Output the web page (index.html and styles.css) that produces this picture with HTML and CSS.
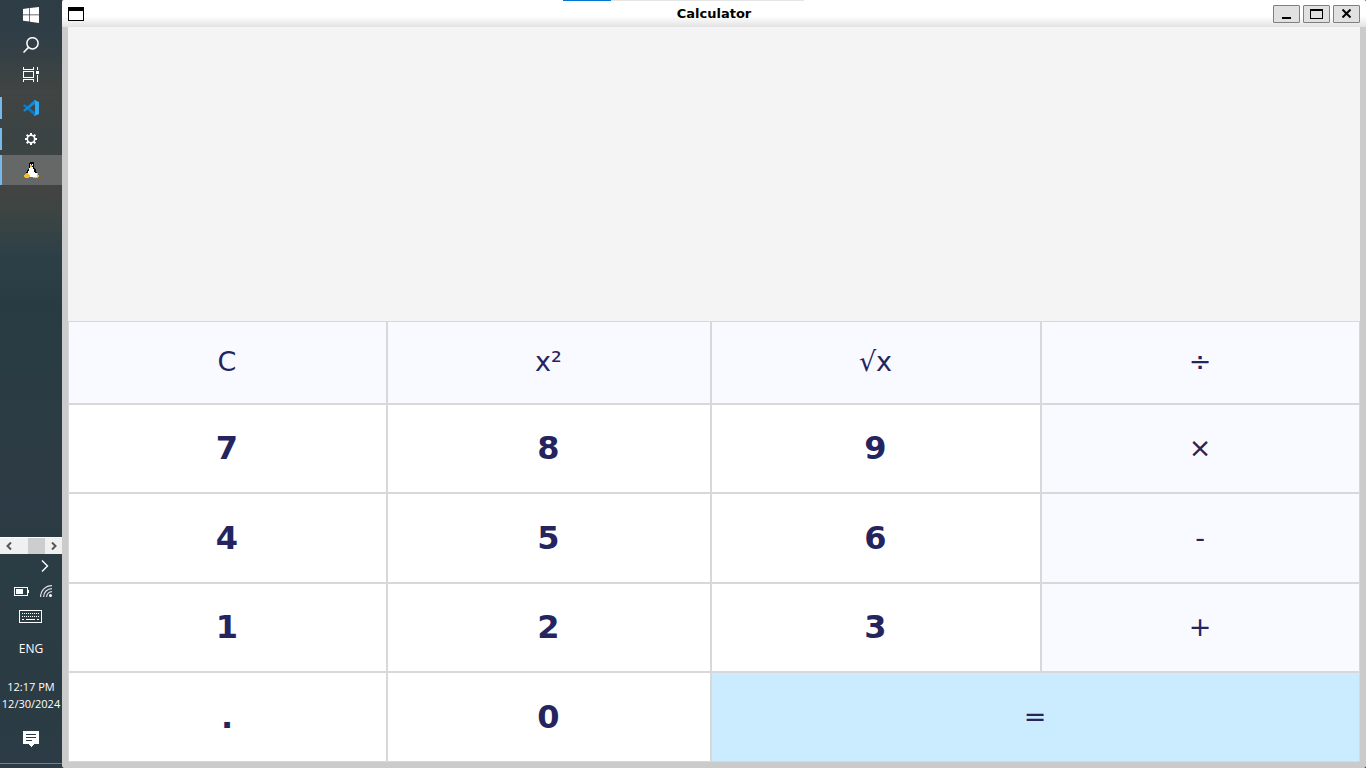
FILE: index.html
```html
<!DOCTYPE html>
<html lang="en">
<head>
<meta charset="utf-8">
<title>Calculator</title>
<link rel="stylesheet" href="styles.css">
</head>
<body>
<div class="desktop">
  <nav class="taskbar" aria-label="Taskbar">
    <div class="system-buttons">
      <button class="task" type="button" aria-label="Start"><svg width="16" height="16" viewBox="0 0 16 16" fill="#fff"><path d="M0 2l6.3-.9v6.4H0zM7 1l9-1v7.5H7zM0 8.2h6.3v6.4L0 13.8zM7 8.2h9V16l-9-1.2z"/></svg></button>
      <button class="task" type="button" aria-label="Search"><svg width="16" height="16" viewBox="0 0 16 16" fill="none" stroke="#fff" stroke-width="1.5"><circle cx="9.5" cy="6.3" r="5.6"/><path d="M5.5 10.4L.5 15.5"/></svg></button>
      <button class="task" type="button" aria-label="Task view"><svg width="16" height="16" viewBox="0 0 16 16" fill="none" stroke="#fff" shape-rendering="crispEdges"><path d="M.5 0v2.500h10V0M.5 15v-2.500h10V15M.5 4.500h10v6H.5zM14.500 0v3M14.500 8v7"/><path d="M13 4h3v3h-3z" fill="#fff" stroke="none"/></svg></button>
    </div>
    <div class="running-apps">
      <button class="task running" type="button" aria-label="Code editor"><svg width="16" height="16" viewBox="0 0 16 16"><path d="M0 5.600L1.600 4.200 12 12v4h-.4z" fill="#0879c9"/><path d="M0 10.400L11.600 0H12v4L1.600 11.800z" fill="#0c8bdc"/><path d="M11.600 0L16 2v12l-4.400 2-.8-.5L12 15V1l-1.200-.5z" fill="#2fa8f2"/><path d="M12 1h1v14h-1z" fill="#2fa8f2"/></svg></button>
      <button class="task running" type="button" aria-label="Settings"><svg width="12" height="12" viewBox="0 0 12 12" fill="none" stroke="#fff"><circle cx="6" cy="6" r="3.700" stroke-width="1.600"/><path d="M10 6h2M0 6h2M6 0v2M6 10v2M8.800 8.800l1.500 1.500M1.700 1.700l1.500 1.500M8.800 3.200l1.500-1.500M1.700 10.300l1.500-1.500" stroke-width="2"/></svg></button>
      <button class="task running active" type="button" aria-label="Linux app"><svg width="18" height="16" viewBox="0 0 18 16" shape-rendering="crispEdges"><path d="M8 0h3l1 1v4l2 3 1 3v4H4v-4l3-5V1z" fill="#080808"/><path d="M8 5h3l1 3 1 3v3l-2 1H6v-4z" fill="#fff"/><path d="M12 11h3l1 3-1 1h-4z" fill="#fff"/><path d="M8 2h1v1H8zM10 2h1v1h-1z" fill="#fff"/><path d="M8 3h3v1h-1v1H8zM4 11h2l2 3-1 2H4l-2-1v-2zM15 11h1l1 3v1l-2 1h-4v-1h4z" fill="#f4bd24"/></svg></button>
    </div>
    <div class="tray">
      <div class="scroller">
        <button class="scroll-arrow" type="button" aria-label="Scroll left"><svg width="6" height="8" viewBox="0 0 6 8" fill="none" stroke="#555" stroke-width="2"><path d="M5 .5L1.500 4 5 7.500"/></svg></button>
        <span class="scroll-track"><span class="scroll-thumb"></span></span>
        <button class="scroll-arrow" type="button" aria-label="Scroll right"><svg width="6" height="8" viewBox="0 0 6 8" fill="none" stroke="#555" stroke-width="2"><path d="M1 .5L4.500 4 1 7.500"/></svg></button>
      </div>
      <button class="tray-more" type="button" aria-label="Show hidden icons"><svg width="8" height="12" viewBox="0 0 8 12" fill="none" stroke="#fff" stroke-width="1.400"><path d="M1 .5L6.500 6 1 11.500"/></svg></button>
      <div class="tray-status">
        <svg width="15" height="9" viewBox="0 0 15 9" role="img" aria-label="Battery" shape-rendering="crispEdges"><path d="M.5.5h13v8H.5z" fill="none" stroke="#fff"/><path d="M2 2h7v5H2zM14 3h1v3h-1z" fill="#fff"/></svg>
        <svg width="12" height="12" viewBox="0 0 12 12" role="img" aria-label="Wi-Fi" fill="none" stroke="#fff" stroke-width="1.200"><path d="M.6 12C.6 5.500 5.500.6 12 .6M3.600 12c0-4.800 3.600-8.400 8.400-8.400M6.600 12c0-3 2.400-5.400 5.400-5.400" stroke-opacity=".85"/><circle cx="10.500" cy="10.500" r="1.500" fill="#fff" stroke="none"/></svg>
      </div>
      <button class="tray-row" type="button" aria-label="Touch keyboard"><svg width="23" height="13" viewBox="0 0 23 13" fill="none" stroke="#fff" shape-rendering="crispEdges"><path d="M.5.5h22v12H.5z"/><path d="M3 3.500h17M3 6.500h17" stroke-dasharray="1 1"/><path d="M3 9.500h2M7 9.500h9M18 9.500h2"/></svg></button>
      <button class="language" type="button">ENG</button>
      <button class="clock" type="button"><span>12:17 PM</span><span>12/30/2024</span></button>
      <button class="notifications" type="button" aria-label="Notifications"><svg width="16" height="16" viewBox="0 0 16 16" shape-rendering="crispEdges"><path d="M0 0h16v13h-5l-3 3-3-3H0z" fill="#fff"/><path d="M3 3.500h10M3 6.500h10M3 9.500h6" stroke="#2c3b45"/></svg></button>
      <div class="show-desktop"></div>
    </div>
  </nav>
  <main class="window">
    <header class="titlebar">
      <svg class="window-icon" width="16" height="14" viewBox="0 0 16 14" shape-rendering="crispEdges"><path d="M0 0h16v14H0z"/><path d="M1 4h14v9H1z" fill="#fff"/></svg>
      <h1 class="title">Calculator</h1>
      <div class="window-controls">
        <button class="control" type="button" aria-label="Minimize"><svg width="13" height="10" viewBox="0 0 13 10"><path d="M2 8h9v2H2z"/></svg></button>
        <button class="control" type="button" aria-label="Maximize"><svg width="13" height="10" viewBox="0 0 13 10" shape-rendering="crispEdges"><path d="M0 0h13v10H0z"/><path d="M1 2h11v7H1z" fill="#e1e1e1"/></svg></button>
        <button class="control" type="button" aria-label="Close"><svg width="9" height="9" viewBox="0 0 9 9" fill="none" stroke="#000" stroke-width="2"><path d="M.5.5l8 8M8.500.5l-8 8"/></svg></button>
      </div>
    </header>
    <section class="calculator" aria-label="Calculator">
      <output class="display" aria-label="Result"></output>
      <button class="key operator" type="button">C</button>
      <button class="key operator" type="button">x²</button>
      <button class="key operator" type="button">√x</button>
      <button class="key operator" type="button">÷</button>
      <button class="key" type="button">7</button>
      <button class="key" type="button">8</button>
      <button class="key" type="button">9</button>
      <button class="key operator" type="button">×</button>
      <button class="key" type="button">4</button>
      <button class="key" type="button">5</button>
      <button class="key" type="button">6</button>
      <button class="key operator" type="button">-</button>
      <button class="key" type="button">1</button>
      <button class="key" type="button">2</button>
      <button class="key" type="button">3</button>
      <button class="key operator" type="button">+</button>
      <button class="key" type="button">.</button>
      <button class="key" type="button">0</button>
      <button class="key operator equals" type="button">=</button>
    </section>
  </main>
  <div class="loading-strip"></div>
</div>
</body>
</html>
```
FILE: styles.css
```css
* {
  box-sizing: border-box;
}

body {
  margin: 0;
  background: #000;
  font-family: "DejaVu Sans", sans-serif;
}

button {
  margin: 0;
  padding: 0;
  border: 0;
  background: none;
  color: inherit;
  font: inherit;
}

svg {
  display: block;
  flex: none;
}

.desktop {
  display: flex;
  height: 100vh;
}

/* Taskbar */
.taskbar {
  display: flex;
  flex-direction: column;
  flex: none;
  width: 62px;
  background: linear-gradient(#2e3c46 0%, #303e46 5%, #414543 12%, #3b4344 18%, #424442 25%, #3c4443 28%, #2e4047 33%, #283b43 40%, #2b3c43 54%, #2d3b45 64%, #2a3c44 75%, #2c3b45 100%);
  color: #fff;
  font-family: "Open Sans", "Noto Sans", sans-serif;
  font-size: 11px;
}

.system-buttons {
  display: flex;
  flex-direction: column;
}

.task {
  display: grid;
  place-items: center;
  height: 30px;
}

.running-apps {
  display: flex;
  flex-direction: column;
  gap: 1px;
  margin-top: 3px;
}

.running {
  background: linear-gradient(#76b9ed, #76b9ed) left center / 2px 22px no-repeat;
}

.running.active {
  background: linear-gradient(#76b9ed, #76b9ed) left center / 2px 100% no-repeat, #656866;
}

.tray {
  display: flex;
  flex-direction: column;
  margin-top: auto;
}

.scroller {
  display: flex;
  height: 17px;
  border-top: 1px solid #fff;
  background: #f0f0f0;
}

.scroll-arrow {
  display: grid;
  place-items: center;
  width: 17px;
}

.scroll-track {
  display: flex;
  flex: 1;
  justify-content: flex-end;
}

.scroll-thumb {
  width: 17px;
  background: #cdcdcd;
}

.tray-more {
  display: flex;
  align-items: center;
  justify-content: flex-end;
  height: 24px;
  padding-right: 13px;
}

.tray-status {
  display: flex;
  align-items: center;
  justify-content: flex-end;
  gap: 11px;
  height: 26px;
  padding-right: 10px;
}

.tray-row {
  display: grid;
  place-items: center;
  height: 26px;
  padding: 0 2px 2px 0;
}

.language {
  height: 38px;
  padding-bottom: 2px;
  font-size: 12px;
}

.clock {
  display: flex;
  flex-direction: column;
  align-items: center;
  margin-top: 10px;
  line-height: 17px;
}

.notifications {
  display: grid;
  place-items: center;
  height: 30px;
  margin-top: 12px;
}

.show-desktop {
  height: 5px;
  margin-top: 9px;
  border-top: 1px solid #72808a;
}

/* Application window */
.window {
  display: flex;
  flex: 1;
  flex-direction: column;
  min-width: 0;
  padding-bottom: 6px;
  border-radius: 2px;
  background: #cbcbcb;
}

.titlebar {
  display: grid;
  grid-template-columns: 1fr auto 1fr;
  align-items: center;
  flex: none;
  height: 27px;
  padding: 0 6px;
  border-radius: 2px 2px 0 0;
  background: linear-gradient(#fff 60%, #e2e2e2);
}

.title {
  margin: 0;
  font-size: 13px;
  line-height: 27px;
}

.window-controls {
  display: flex;
  justify-content: flex-end;
  gap: 3px;
}

.control {
  display: grid;
  place-items: center;
  width: 27px;
  height: 18px;
  border: 1px solid #7f7f7f;
  border-radius: 1px;
  background: #e1e1e1;
}

.loading-strip {
  position: absolute;
  top: 0;
  left: 50%;
  width: 241px;
  height: 1px;
  margin-left: -120px;
  background: linear-gradient(90deg, #0078d7 48px, #e5e5e5 48px);
}

/* Keypad */
.calculator {
  display: grid;
  flex: 1;
  grid-template-columns: 319fr 324fr 330fr 319fr;
  grid-template-rows: 294fr 83fr 89fr 90fr 89fr 90fr;
  margin: 0 6px;
}

.display {
  grid-column: 1 / -1;
  background: #f4f4f4;
}

.key {
  padding: 0 1px 1px 0;
  border: 1px solid #d8d8da;
  background: #fff;
  color: #24245e;
  font-size: 32px;
  font-weight: bold;
  line-height: 38px;
}

.operator {
  background: #f9faff;
  font-size: 27px;
  font-weight: normal;
}

.equals {
  grid-column: span 2;
  background: #cbecff;
}
```
